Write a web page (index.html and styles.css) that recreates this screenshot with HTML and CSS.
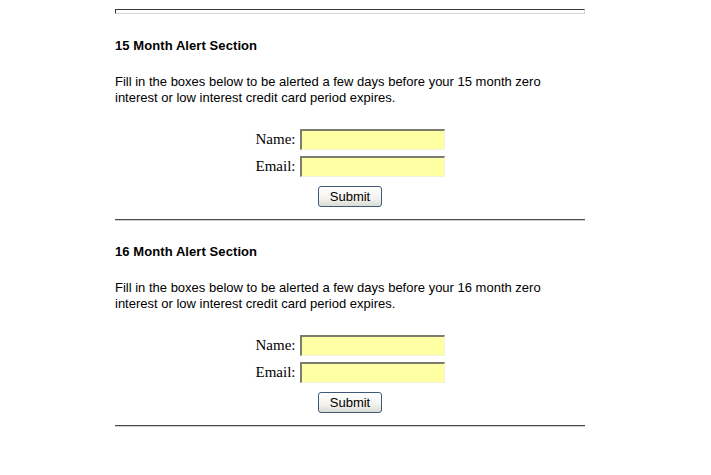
FILE: index.html
```html
<!DOCTYPE html>
<html>
<head>
<meta charset="utf-8">
<title>Alert Sections</title>
<link rel="stylesheet" href="styles.css">
</head>
<body>
<div class="page">
  <div class="top-rule"></div>

  <section class="alert">
    <h2 class="alert-title">15 Month Alert Section</h2>
    <p class="alert-text">Fill in the boxes below to be alerted a few days before your 15 month zero<br>interest or low interest credit card period expires.</p>
    <form class="alert-form">
      <div class="fields">
        <label class="field-label">Name:</label><input class="field-input" type="text">
        <label class="field-label">Email:</label><input class="field-input" type="text">
      </div>
      <button class="submit" type="button">Submit</button>
    </form>
  </section>
  <hr class="rule">

  <section class="alert">
    <h2 class="alert-title">16 Month Alert Section</h2>
    <p class="alert-text">Fill in the boxes below to be alerted a few days before your 16 month zero<br>interest or low interest credit card period expires.</p>
    <form class="alert-form">
      <div class="fields">
        <label class="field-label">Name:</label><input class="field-input" type="text">
        <label class="field-label">Email:</label><input class="field-input" type="text">
      </div>
      <button class="submit" type="button">Submit</button>
    </form>
  </section>
  <hr class="rule">
</div>
</body>
</html>
```

FILE: styles.css
```css
html, body {
  margin: 0;
  padding: 0;
  background: #ffffff;
}

body {
  font-family: "Liberation Sans", Arial, sans-serif;
  color: #000000;
}

.page {
  width: 470px;
  margin-left: 115px;
}

.top-rule {
  margin-top: 9px;
  height: 5px;
  box-sizing: border-box;
  border-top: 1px solid #3c3c3c;
  border-left: 1px solid #3c3c3c;
  border-bottom: 1px solid #d4d4d4;
  border-right: 1px solid #d4d4d4;
}

.alert {
  padding: 23px 0 12px;
}

.page > .top-rule + .alert {
  padding-top: 24px;
}

.alert-title {
  margin: 0;
  font-size: 13px;
  line-height: 15px;
  font-weight: bold;
  letter-spacing: 0.08px;
}

.alert-text {
  margin: 21px 0 0;
  font-size: 13px;
  line-height: 16px;
}

.alert-form {
  margin: 23px 0 0;
  display: flex;
  flex-direction: column;
  align-items: center;
}

.fields {
  display: grid;
  grid-template-columns: auto 145px;
  column-gap: 4px;
  row-gap: 6px;
  align-items: center;
}

.field-label {
  font-family: "Liberation Serif", "Times New Roman", serif;
  font-size: 15px;
  text-align: left;
}

.field-input {
  box-sizing: border-box;
  width: 145px;
  height: 21px;
  margin: 0;
  padding: 1px 3px;
  background: #ffffa4;
  border-top: 2px solid #7c7c6e;
  border-left: 2px solid #7c7c6e;
  border-right: 1px solid #f2f2dc;
  border-bottom: 1px solid #f2f2dc;
  font-family: "Liberation Sans", Arial, sans-serif;
  font-size: 13px;
}

.submit {
  margin-top: 9px;
  box-sizing: border-box;
  width: 64px;
  height: 21px;
  padding: 0;
  border: 1px solid #3f5a78;
  border-radius: 3px;
  background: linear-gradient(#ffffff, #f2f2ee 60%, #dcdcd6);
  font-family: "Liberation Sans", Arial, sans-serif;
  font-size: 13px;
  color: #000000;
}

.rule {
  margin: 0;
  height: 0;
  border: 0;
  border-top: 1px solid #4a4a4a;
  border-bottom: 1px solid #cfcfcf;
}
```
